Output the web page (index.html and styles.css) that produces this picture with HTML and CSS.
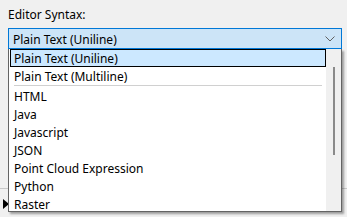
FILE: index.html
```html
<!Doctype html>
<html>
    <head>
        <title>Editor Syntax</title>
        <link rel="stylesheet" href="styles.css">
    </head>
    <body>
        <div class="row-line"></div>
        <div class="row-marker"></div>
        <div id="panel">
            <div class="field-label">Editor Syntax:</div>
            <div class="combo">
                <span class="combo-text">Plain Text (Uniline)</span>
                <svg class="chevron" width="10" height="6" viewBox="0 0 10 6">
                    <path d="M0.5 0.5 L5 5 L9.5 0.5" fill="none" stroke="#606060" stroke-width="1"/>
                </svg>
            </div>
            <div class="dropdown">
                <div class="options">
                    <div class="option selected">Plain Text (Uniline)</div>
                    <div class="option">Plain Text (Multiline)</div>
                    <div class="separator"></div>
                    <div class="option">HTML</div>
                    <div class="option">Java</div>
                    <div class="option">Javascript</div>
                    <div class="option">JSON</div>
                    <div class="option">Point Cloud Expression</div>
                    <div class="option">Python</div>
                    <div class="option">Raster</div>
                </div>
                <div class="scrollbar">
                    <div class="thumb"></div>
                </div>
            </div>
        </div>
    </body>
</html>
```

FILE: styles.css
```css
body{
    margin: 0;
    padding: 0;
    background: #f0f0f0;
    font-family: "Noto Sans", "Open Sans", sans-serif;
    font-size: 12px;
    color: #000;
    position: relative;
    height: 217px;
    overflow: hidden;
}
#panel{
    padding: 6px 5px 0 8px;
}
.field-label{
    height: 22px;
    line-height: 18px;
}
.combo{
    display: flex;
    align-items: center;
    justify-content: space-between;
    height: 19px;
    border: 1px solid #0078d7;
    background: #cce4f7;
    padding: 0 6px 0 4px;
}
.combo-text{
    line-height: 19px;
    padding-top: 2px;
}
.chevron{
    display: block;
}
.dropdown{
    display: flex;
    height: 162px;
    border: 1px solid #646464;
    border-top: none;
    background: #fff;
    box-shadow: 2px 2px 2px rgba(0,0,0,0.35);
    overflow: hidden;
    position: relative;
}
.options{
    flex: 1;
    padding-left: 1px;
}
.option{
    box-sizing: border-box;
    height: 18px;
    line-height: 18px;
    padding-left: 3px;
    border: 1px solid transparent;
    white-space: nowrap;
}
.option.selected{
    background: #cce8ff;
    border-color: #000;
}
.separator{
    margin: 0 4px 1px 4px;
    border-top: 1px solid #d0d0d0;
}
.scrollbar{
    width: 15px;
    background: #f0f0f0;
    position: relative;
}
.thumb{
    position: absolute;
    left: 7px;
    top: 18px;
    width: 2px;
    height: 88px;
    background: #8a8a8a;
}
.row-line{
    position: absolute;
    left: 0;
    top: 188px;
    width: 347px;
    height: 1px;
    background: #c8c8c8;
}
.row-marker{
    position: absolute;
    left: 3px;
    top: 199px;
    width: 0;
    height: 0;
    border-top: 5px solid transparent;
    border-bottom: 5px solid transparent;
    border-left: 6px solid #000;
}
```
